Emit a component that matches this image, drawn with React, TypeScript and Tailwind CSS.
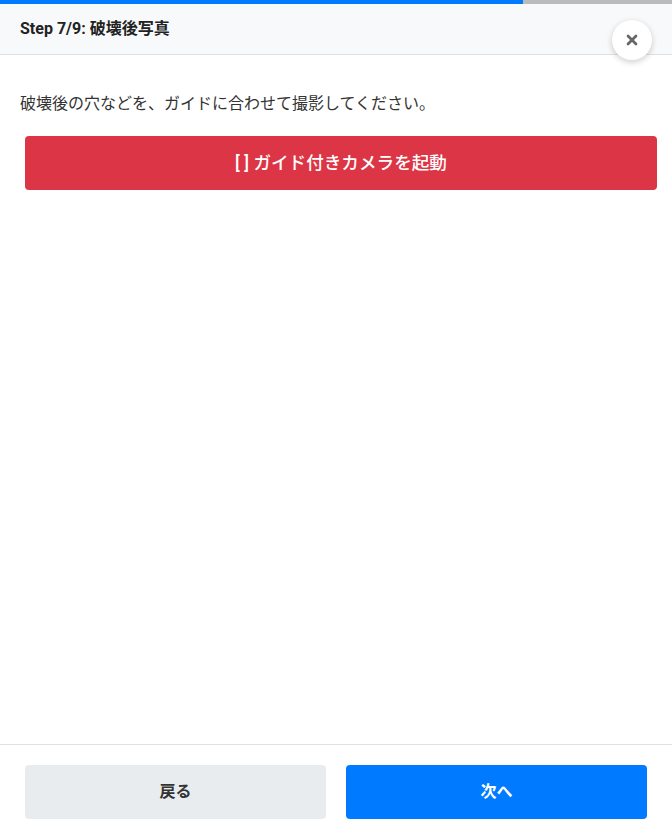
import { X } from 'lucide-react'

const App = () => {
    const step = 7
    const total = 9

    return (
        <div className="relative flex h-[839px] w-full flex-col overflow-hidden bg-white text-[#333] font-['Roboto','Noto_Sans_CJK_JP',sans-serif]">
            {/* progress */}
            <div className="h-1 w-full bg-[#bbbbbb]">
                <div className="h-full bg-[#007bff]" style={{ width: `${(step / total) * 100}%` }} />
            </div>

            <div className="flex h-[51px] items-center border-b border-[#dee2e6] bg-[#f8f9fa] px-5">
                <h2 className="text-base font-bold text-[#222]">Step {step}/{total}: 破壊後写真</h2>
            </div>

            <button className="absolute right-5 top-5 flex h-10 w-10 items-center justify-center rounded-full bg-white shadow-[0_2px_6px_rgba(0,0,0,0.2)]">
                <X size={16} strokeWidth={4} className="text-[#666]" />
            </button>

            <div className="flex-1 px-5 pt-[37px]">
                <p className="text-base leading-6">破壊後の穴などを、ガイドに合わせて撮影してください。</p>
                <button className="ml-[5px] mt-[20px] flex h-[54px] w-full items-center justify-center rounded bg-[#dc3545] text-[1.1rem] font-medium text-white">
                    [ ] ガイド付きカメラを起動
                </button>
            </div>

            <div className="flex gap-5 border-t border-[#dee2e6] px-[25px] py-5">
                <button className="h-[54px] flex-1 rounded bg-[#e9ecef] text-base font-bold text-[#333]">戻る</button>
                <button className="h-[54px] flex-1 rounded bg-[#007bff] text-base font-bold text-white">次へ</button>
            </div>
        </div>
    )
}

export default App
